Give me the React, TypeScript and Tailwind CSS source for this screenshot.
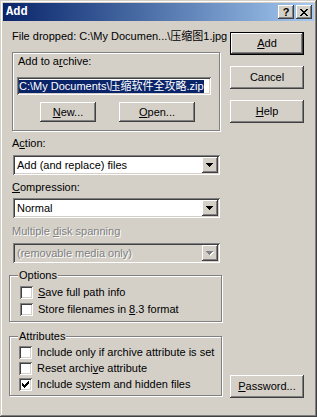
import React from "react";

const raised =
  "shadow-[inset_-1px_-1px_0_#404040,inset_1px_1px_0_#ffffff,inset_-2px_-2px_0_#808080,inset_2px_2px_0_#d4d0c8]";
const sunken =
  "shadow-[inset_1px_1px_0_#808080,inset_-1px_-1px_0_#ffffff,inset_2px_2px_0_#404040,inset_-2px_-2px_0_#d4d0c8]";
const etched =
  "border border-[#808080] shadow-[inset_1px_1px_0_#ffffff,1px_1px_0_#ffffff]";
const disabledText = "text-[#808080] [text-shadow:1px_1px_0_#ffffff]";

function Arrow({ disabled }: { disabled?: boolean }) {
  const rows = [
    [0, 0, 7],
    [1, 1, 5],
    [2, 2, 3],
    [3, 3, 1],
  ];
  return (
    <svg width="8" height="5" className="block" shapeRendering="crispEdges">
      {disabled &&
        rows.map(([x, y, w], i) => (
          <rect key={"s" + i} x={x + 1} y={y + 1} width={w} height={1} fill="#ffffff" />
        ))}
      {rows.map(([x, y, w], i) => (
        <rect key={i} x={x} y={y} width={w} height={1} fill={disabled ? "#808080" : "#000000"} />
      ))}
    </svg>
  );
}

function Select({ text, disabled }: { text: string; disabled?: boolean }) {
  return (
    <div
      className={`ml-[4px] w-[207px] h-[20px] p-[2px] flex ${sunken} ${
        disabled ? "bg-[#d4d0c8]" : "bg-white"
      }`}
    >
      <div className={`flex-1 pl-[2px] flex items-center whitespace-nowrap ${disabled ? disabledText : ""}`}>
        {text}
      </div>
      <div className={`w-[16px] h-full bg-[#d4d0c8] flex items-center justify-center ${raised}`}>
        <Arrow disabled={disabled} />
      </div>
    </div>
  );
}

function Check({ checked }: { checked?: boolean }) {
  const px = [
    [9, 3, 1],
    [8, 4, 2],
    [3, 5, 1],
    [7, 5, 3],
    [3, 6, 2],
    [6, 6, 3],
    [3, 7, 5],
    [4, 8, 3],
    [5, 9, 1],
  ];
  return (
    <div className={`w-[13px] h-[13px] shrink-0 bg-white ${sunken}`}>
      {checked && (
        <svg width="13" height="13" className="block" shapeRendering="crispEdges">
          {px.map(([x, y, w], i) => (
            <rect key={i} x={x} y={y} width={w} height={1} fill="#000000" />
          ))}
        </svg>
      )}
    </div>
  );
}

function CheckRow({
  checked,
  indent,
  children,
  h,
}: {
  checked?: boolean;
  indent: string;
  children: React.ReactNode;
  h: string;
}) {
  return (
    <div className={`flex items-center ${indent} ${h}`}>
      <Check checked={checked} />
      <span className="ml-[5px] whitespace-nowrap">{children}</span>
    </div>
  );
}

function Button({
  children,
  def,
  className = "",
}: {
  children: React.ReactNode;
  def?: boolean;
  className?: string;
}) {
  return (
    <div
      className={`flex items-center justify-center bg-[#d4d0c8] ${raised} ${
        def ? "border border-black" : ""
      } ${className}`}
    >
      <span className="whitespace-nowrap">{children}</span>
    </div>
  );
}

function XIcon() {
  const rows = [
    [[0, 2], [6, 2]],
    [[1, 2], [5, 2]],
    [[2, 4]],
    [[3, 2]],
    [[2, 4]],
    [[1, 2], [5, 2]],
    [[0, 2], [6, 2]],
  ];
  return (
    <svg width="8" height="7" className="block" shapeRendering="crispEdges">
      {rows.map((segs, y) =>
        segs.map(([x, w], j) => <rect key={y + "-" + j} x={x} y={y} width={w} height={1} fill="#000" />)
      )}
    </svg>
  );
}

export default function App() {
  return (
    <div className="w-[317px] h-[417px] bg-[#d4d0c8] p-[3px] flex flex-col text-black text-[11px] leading-[13px] font-['Liberation_Sans','Noto_Sans_CJK_SC',sans-serif] shadow-[inset_-1px_-1px_0_#404040,inset_1px_1px_0_#d4d0c8,inset_-2px_-2px_0_#808080,inset_2px_2px_0_#ffffff]">
      {/* Title bar */}
      <div className="h-[18px] flex items-center pl-[3px] pr-[2px] bg-linear-to-r from-[#0a246a] to-[#a6caf0]">
        <span className="text-white font-bold text-[12px] font-['Liberation_Mono',monospace]">Add</span>
        <div className="flex-1" />
        <div className={`w-[16px] h-[14px] bg-[#d4d0c8] flex items-center justify-center ${raised}`}>
          <span className="font-bold text-[11px] leading-[11px] font-['Liberation_Sans',sans-serif]">?</span>
        </div>
        <div className={`ml-[2px] w-[16px] h-[14px] bg-[#d4d0c8] flex items-center justify-center ${raised}`}>
          <XIcon />
        </div>
      </div>

      {/* Body */}
      <div className="flex flex-1">
        {/* Left column */}
        <div className="ml-[6px] w-[213px] flex flex-col">
          <div className="mt-[9px] ml-[3px] whitespace-nowrap">File dropped: C:\My Documen...\压缩图1.jpg</div>

          <div className={`mt-[9px] ml-[3px] w-[208px] h-[79px] ${etched} flex flex-col`}>
            <div className="mt-[2px] ml-[5px]">
              Add to a<u>r</u>chive:
            </div>
            <div className={`mt-[9px] ml-[4px] w-[194px] h-[18px] bg-white p-[2px] flex items-center overflow-hidden ${sunken}`}>
              <span className="bg-[#0a246a] text-white whitespace-nowrap">C:\My Documents\压缩软件全攻略.zip</span>
            </div>
            <div className="mt-[7px] flex">
              <Button className="ml-[27px] w-[56px] h-[20px]">
                <u>N</u>ew...
              </Button>
              <Button className="ml-[23px] w-[76px] h-[20px]">
                <u>O</u>pen...
              </Button>
            </div>
          </div>

          <div className="mt-[6px] ml-[3px]">
            A<u>c</u>tion:
          </div>
          <div className="mt-[5px]">
            <Select text="Add (and replace) files" />
          </div>

          <div className="mt-[6px] ml-[3px]">
            <u>C</u>ompression:
          </div>
          <div className="mt-[4px]">
            <Select text="Normal" />
          </div>

          <div className={`mt-[7px] ml-[3px] ${disabledText}`}>
            Multiple <u>d</u>isk spanning
          </div>
          <div className="mt-[5px]">
            <Select text="(removable media only)" disabled />
          </div>

          <fieldset className={`mt-[6px] ${etched} pb-[5px]`}>
            <legend className="ml-[8px] px-[1px] bg-[#d4d0c8]">Options</legend>
            <div className="mt-[4px] flex flex-col gap-[4px]">
              <CheckRow indent="ml-[10px]" h="h-[13px]">
                <u>S</u>ave full path info
              </CheckRow>
              <CheckRow indent="ml-[10px]" h="h-[13px]">
                Store filenames in <u>8</u>.3 format
              </CheckRow>
            </div>
          </fieldset>

          <fieldset className={`mt-[8px] ${etched} pb-[3px]`}>
            <legend className="ml-[8px] px-[1px] bg-[#d4d0c8]">Attributes</legend>
            <div className="mt-[1px] flex flex-col">
              <CheckRow indent="ml-[9px]" h="h-[16px]">
                Include only if archive attribute is set
              </CheckRow>
              <CheckRow indent="ml-[9px]" h="h-[16px]">
                Reset archi<u>v</u>e attribute
              </CheckRow>
              <CheckRow indent="ml-[9px]" h="h-[16px]" checked>
                Include s<u>y</u>stem and hidden files
              </CheckRow>
            </div>
          </fieldset>
        </div>

        {/* Right column */}
        <div className="ml-[8px] w-[74px] flex flex-col">
          <Button def className="mt-[11px] h-[23px]">
            <u>A</u>dd
          </Button>
          <Button className="mt-[11px] h-[23px]">Cancel</Button>
          <Button className="mt-[11px] h-[23px]">
            <u>H</u>elp
          </Button>
          <div className="flex-1" />
          <Button className="mb-[16px] h-[23px]">
            <u>P</u>assword...
          </Button>
        </div>
      </div>
    </div>
  );
}
